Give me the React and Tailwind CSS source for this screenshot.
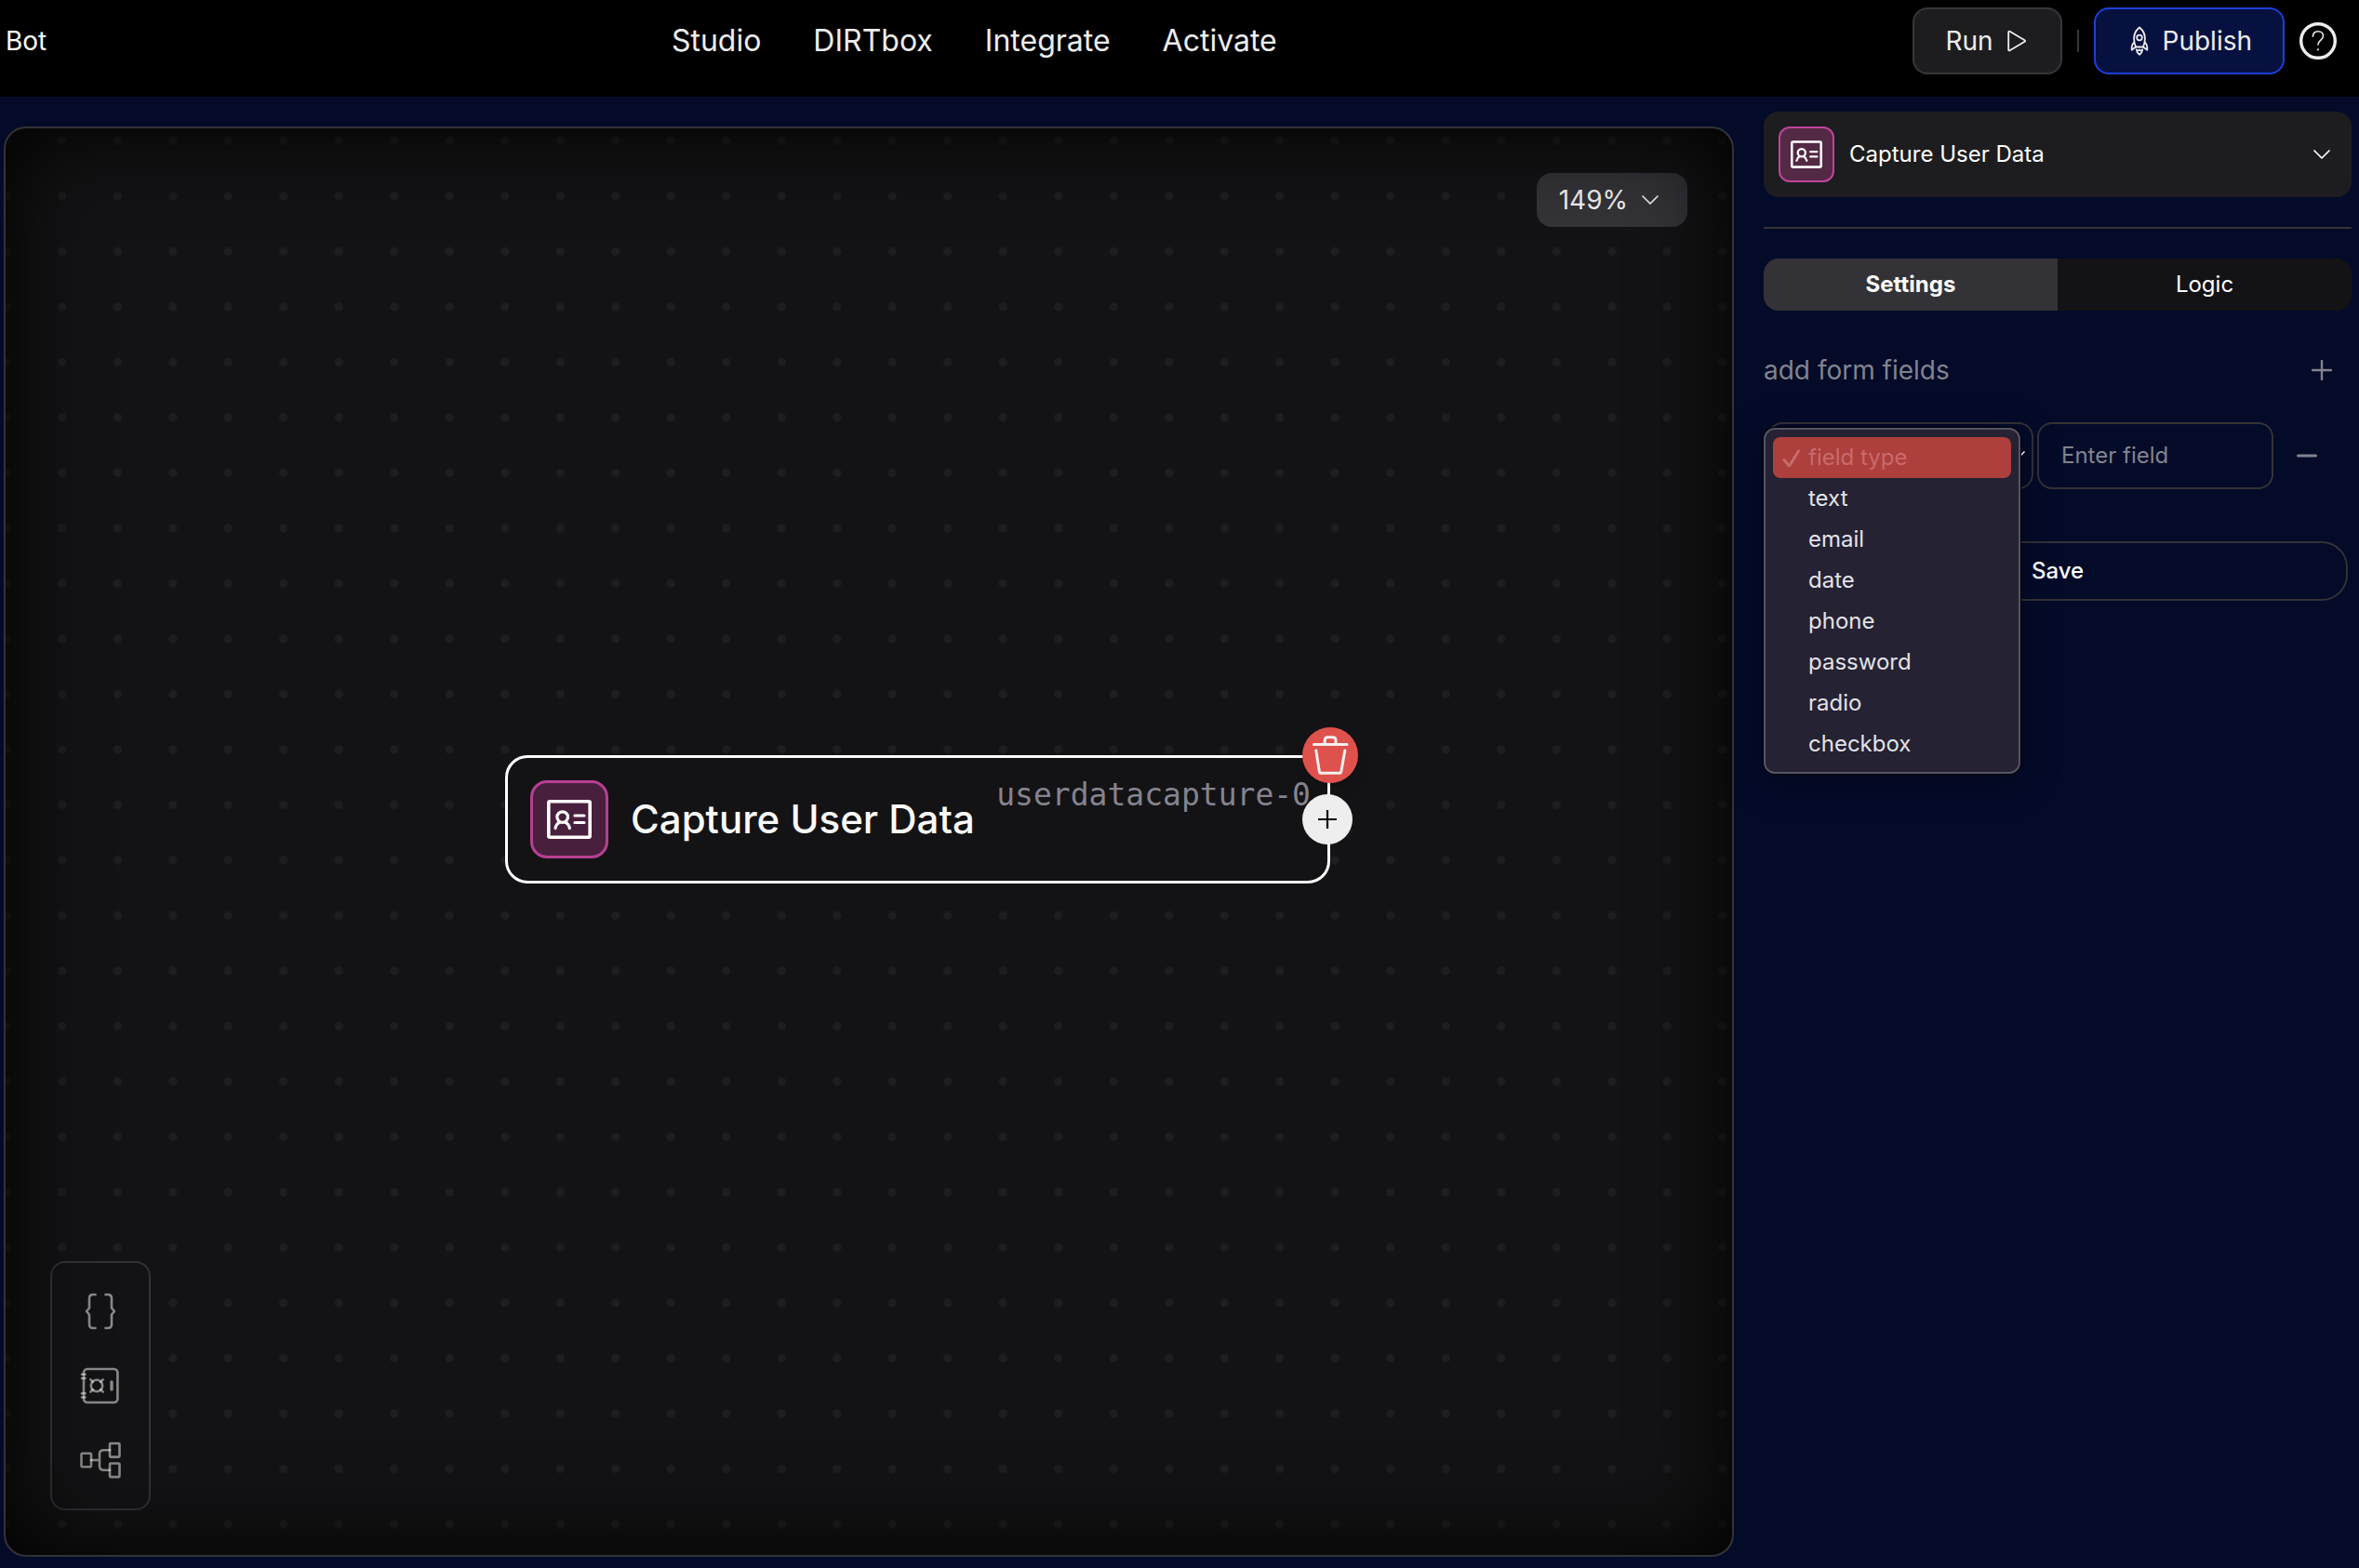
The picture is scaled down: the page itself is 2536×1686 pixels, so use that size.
import React from "react";

const FIELD_TYPES = ["text", "email", "date", "phone", "password", "radio", "checkbox"];
const NAV_LINKS = ["Studio", "DIRTbox", "Integrate", "Activate"];

function IdCardIcon({ className }) {
  return (
    <svg viewBox="0 0 48 42" fill="none" stroke="currentColor" strokeLinecap="round" strokeLinejoin="round" className={className} aria-hidden="true">
      <rect x="1.8" y="1.8" width="44.4" height="38.4" rx="1.5" strokeWidth="3.6" />
      <g strokeWidth="3.2">
        <circle cx="16.7" cy="18.6" r="5.8" />
        <path d="M9 30.5c.8-3.2 2.2-5 4.4-6.3M24.400 30.500c-.8-3.200-2.200-5-4.400-6.300" />
        <path d="M30 17h10M30 24.500h10" />
      </g>
    </svg>
  );
}

function ChevronIcon({ className }) {
  return (
    <svg viewBox="0 0 20 20" fill="none" stroke="currentColor" strokeWidth="1.7" strokeLinecap="round" strokeLinejoin="round" className={className} aria-hidden="true">
      <path d="M2 6l8 8 8-8" />
    </svg>
  );
}

function PlayIcon() {
  return (
    <svg viewBox="0 0 28 28" fill="none" stroke="currentColor" strokeWidth="1.8" strokeLinejoin="round" className="size-7" aria-hidden="true">
      <path d="M5.2 4.6c0-.8.7-1.200 1.400-.8l16 9.400c.7.4.7 1.200 0 1.600l-16 9.400c-.7.4-1.400 0-1.400-.8z" />
    </svg>
  );
}

function RocketIcon() {
  return (
    <svg viewBox="0 0 28 32" fill="none" stroke="currentColor" strokeWidth="1.8" strokeLinecap="round" strokeLinejoin="round" className="h-8 w-7" aria-hidden="true">
      <path d="M14 1.500c-4 3.300-6 7.300-5.900 12 0 3.200.7 6.200 1.900 9h8c1.200-2.800 1.900-5.800 1.900-9 .1-4.700-1.900-8.700-5.900-12z" />
      <circle cx="14" cy="12.500" r="2.800" />
      <path d="M8.300 17.500C6.500 19 5.700 20.500 5.700 22.500v3.200l4.300-3.200M19.700 17.500c1.800 1.500 2.600 3 2.600 5v3.200L18 22.500" />
      <path d="M10.800 25.500c.2 2.200 1.300 4 3.200 5.300 1.900-1.300 3-3.100 3.200-5.300-1.200 1.200-2.200 1.200-3.200 0-1 1.200-2 1.200-3.200 0z" />
    </svg>
  );
}

function TrashIcon() {
  return (
    <svg viewBox="0 0 60 60" fill="none" stroke="#f4eeee" strokeWidth="3" strokeLinecap="round" strokeLinejoin="round" className="size-full" aria-hidden="true">
      <path d="M12.500 18.500h35.500" />
      <path d="M24.200 18v-4c0-2.200 1.200-3.300 3.200-3.300h5.400c2 0 3.200 1.100 3.200 3.300v4" />
      <path d="M14.800 25l3.500 22.200c.2 1.400 1 2.100 2.300 2.100h19c1.300 0 2.100-.7 2.300-2.100L45.800 25" />
    </svg>
  );
}

function ToolIcon({ children }) {
  return (
    <svg viewBox="-2 -2 44 44" fill="none" stroke="#ffffff" strokeOpacity="0.5" strokeWidth="2.6" strokeLinecap="round" strokeLinejoin="round" className="size-11" aria-hidden="true">
      {children}
    </svg>
  );
}

function Header() {
  return (
    <header className="flex h-[104px] items-start bg-black pt-2 pr-6 pl-1.5 text-[#ededed]">
      <div className="flex h-[72px] items-center text-[28px] text-white">Bot</div>
      <nav className="flex h-[72px] flex-1 items-center justify-center gap-14 pr-3 text-[32px]">
        {NAV_LINKS.map((label) => (
          <a key={label} href="#">{label}</a>
        ))}
      </nav>
      <div className="flex h-[72px] items-center gap-4 text-[28px]">
        <button className="flex h-full items-center gap-[11px] rounded-2xl border-2 border-[#37363a] bg-[#1d1d1f] px-[33px]">
          Run
          <PlayIcon />
        </button>
        <div className="h-6 w-0.5 bg-[#37363a]" />
        <button className="flex h-full items-center gap-[11px] rounded-2xl border-2 border-[#1d3fd8] bg-[#071140] px-[33px]">
          <RocketIcon />
          Publish
        </button>
        <button aria-label="Help" className="size-10">
          <svg viewBox="0 0 40 40" fill="none" stroke="currentColor" strokeLinecap="round" className="size-full" aria-hidden="true">
            <circle cx="20" cy="20" r="18.300" strokeWidth="3.400" />
            <path d="M14.500 15.200c0-3.300 2.200-5.400 5.500-5.400s5.500 2.100 5.500 5c0 4.300-5.500 4.500-5.500 9.200" strokeWidth="1.600" />
            <circle cx="20" cy="29.300" r="1.100" fill="currentColor" stroke="none" />
          </svg>
        </button>
      </div>
    </header>
  );
}

function Canvas() {
  return (
    <main className="relative mt-8 mb-3 ml-1 flex-1 overflow-hidden rounded-3xl border-2 border-[#333236] bg-[#131315]">
      <svg className="absolute inset-0 size-full" aria-hidden="true">
        <defs>
          <pattern id="dots" x="31" y="-16.4" width="59.5" height="59.5" patternUnits="userSpaceOnUse">
            <circle cx="29.75" cy="29.75" r="4.5" fill="#1e1e20" />
          </pattern>
        </defs>
        <rect width="100%" height="100%" fill="url(#dots)" />
      </svg>

      <div className="absolute top-[674px] left-[537px] flex h-[138px] w-[887px] items-center rounded-3xl border-[3px] border-white bg-[#131315] pl-6">
        <div className="flex size-[84px] shrink-0 items-center justify-center rounded-[18px] border-[3px] border-[#b83f94] bg-[#48203d] text-white">
          <IdCardIcon className="h-[42px] w-12" />
        </div>
        <span className="ml-6 text-[42px] leading-[48px] font-medium whitespace-nowrap text-[#fafafa]">Capture User Data</span>
        <span className="absolute top-5 right-[18px] font-['DejaVu_Sans_Mono',monospace] text-[33px] leading-10 text-[#85838f]">
          userdatacapture-0
        </span>
        <button aria-label="Delete node" className="absolute -top-[33px] -right-[33px] size-[60px] rounded-full bg-[#df514c] shadow-lg">
          <TrashIcon />
        </button>
        <button aria-label="Add connection" className="absolute top-[39px] -right-[27px] flex size-[54px] items-center justify-center rounded-full bg-[#eeeeee] text-black">
          <svg viewBox="0 0 20 20" stroke="currentColor" strokeWidth="2.200" className="size-5" aria-hidden="true">
            <path d="M10 0v20M0 10h20" />
          </svg>
        </button>
      </div>

      <button className="absolute top-12 right-12 flex h-[58px] items-center gap-3.5 rounded-2xl bg-[#343338] pr-[30px] pl-6 text-[28px] text-[#f2f2f2]">
        149%
        <ChevronIcon className="size-5" />
      </button>

      <div className="absolute bottom-12 left-12 flex w-[108px] flex-col items-center gap-9 rounded-2xl border-2 border-[#333236] bg-[#131315] py-[30px]">
        <button aria-label="Variables">
          <ToolIcon>
            <path d="M14.500 2h-2.500q-4 0-4 4v10.500L5 20l3 3.500V34q0 4 4 4h2.500" />
            <path d="M25.500 2h2.500q4 0 4 4v10.500L35 20l-3 3.500V34q0 4-4 4h-2.500" />
          </ToolIcon>
        </button>
        <button aria-label="Vault">
          <ToolIcon>
            <rect x="2" y="2" width="36.400" height="36" rx="4" />
            <path d="M0 7.700h3.500" />
            <path d="M0 12h3.500" />
            <path d="M0 28.300h3.500" />
            <path d="M0 32.500h3.500" />
            <circle cx="16" cy="20" r="6.200" />
            <path d="M9.300 13.300l2.500 2.500M22.700 13.300l-2.500 2.500M9.300 26.700l2.500-2.500M22.700 26.700l-2.500-2.500" />
            <path d="M32 16v8" strokeWidth="3.400" />
          </ToolIcon>
        </button>
        <button aria-label="Flow">
          <ToolIcon>
            <rect x="-0.500" y="12.700" width="10.500" height="14.600" rx="1" />
            <rect x="30" y="2" width="10.500" height="14.600" rx="1" />
            <rect x="30" y="23.500" width="10.500" height="14.600" rx="1" />
            <path d="M10 20h9M30 9.300h-6.500q-4.500 0-4.500 4.500v12.500q0 4.500 4.500 4.500H30" />
          </ToolIcon>
        </button>
      </div>

      <div className="pointer-events-none absolute inset-0 rounded-[22px] shadow-[inset_0_0_100px_#000]" />
    </main>
  );
}

function FieldTypeMenu() {
  return (
    <ul
      role="listbox"
      aria-label="field type"
      className="absolute top-1.5 -left-1 z-10 h-[372px] w-[276px] rounded-xl border-2 border-[#565464] bg-[#252234] p-2 text-[24px] text-[#e3e2e6] shadow-[0_0_0_1px_#000,0_8px_40px_rgba(0,0,0,0.35)]"
    >
      <li role="option" aria-selected="true" className="flex h-11 items-center rounded-lg bg-[#ad3f3d] pl-2.5 text-[#c96b6a]">
        <svg viewBox="0 0 20 20" fill="none" stroke="currentColor" strokeWidth="3" strokeLinecap="round" strokeLinejoin="round" className="mr-2 size-5" aria-hidden="true">
          <path d="M2 12.500L7.500 19 17.500 3" />
        </svg>
        field type
      </li>
      {FIELD_TYPES.map((type) => (
        <li key={type} role="option" aria-selected="false" className="flex h-11 items-center pl-[38px]">
          {type}
        </li>
      ))}
    </ul>
  );
}

function Sidebar() {
  return (
    <aside className="w-[672px] shrink-0 pt-4 pr-2 pl-8 text-white">
      <button className="flex w-full items-center gap-4 rounded-2xl bg-[#1d1d1f] p-4 text-[24px]">
        <span className="flex size-[60px] items-center justify-center rounded-xl border-2 border-[#c0439b] bg-[#542945]">
          <IdCardIcon className="h-[30px] w-[34px]" />
        </span>
        Capture User Data
        <ChevronIcon className="mr-1.5 ml-auto size-5" />
      </button>
      <hr className="mt-8 border-t-2 border-[#333236]" />

      <div role="tablist" className="mt-8 grid h-14 grid-cols-2 overflow-hidden rounded-2xl bg-[#131315] text-[24px]">
        <button role="tab" aria-selected="true" className="bg-[#333236] font-bold">Settings</button>
        <button role="tab" aria-selected="false">Logic</button>
      </div>

      <div className="mt-10 flex h-12 items-center justify-between pr-[21px] text-[28px] text-[#82838f]">
        <h2>add form fields</h2>
        <button aria-label="Add field">
          <svg viewBox="0 0 22 22" stroke="currentColor" strokeWidth="2.4" strokeLinecap="round" className="size-[22px]" aria-hidden="true">
            <path d="M11 1v20M1 11h20" />
          </svg>
        </button>
      </div>

      <form className="mt-8 px-1 text-[24px]" onSubmit={(e) => e.preventDefault()}>
        <div className="grid h-[72px] grid-cols-[286fr_254fr_76px] gap-1">
          <div className="relative min-w-0">
            <select aria-label="field type" className="size-full appearance-none rounded-2xl border-2 border-[#333236] bg-transparent px-6 text-[#82838f]">
              <option>field type</option>
              {FIELD_TYPES.map((type) => (
                <option key={type}>{type}</option>
              ))}
            </select>
            <ChevronIcon className="pointer-events-none absolute top-[26px] right-2 size-5" />
            <FieldTypeMenu />
          </div>
          <input
            aria-label="Field name"
            placeholder="Enter field"
            className="min-w-0 rounded-2xl border-2 border-[#333236] bg-transparent px-6 placeholder:text-[#82838f]"
          />
          <button type="button" aria-label="Remove field" className="flex items-center justify-center pr-3 text-[#82838f]">
            <svg viewBox="0 0 22 22" stroke="currentColor" strokeWidth="3" strokeLinecap="round" className="size-[22px]" aria-hidden="true">
              <path d="M1.500 11h19" />
            </svg>
          </button>
        </div>
        <button type="submit" className="mt-14 h-16 w-full rounded-[28px] border-2 border-[#333236] font-medium">
          Save
        </button>
      </form>
    </aside>
  );
}

export default function App() {
  return (
    <div className="flex min-h-screen flex-col bg-[#040b29] font-['Inter',sans-serif]">
      <Header />
      <div className="flex flex-1">
        <Canvas />
        <Sidebar />
      </div>
    </div>
  );
}
